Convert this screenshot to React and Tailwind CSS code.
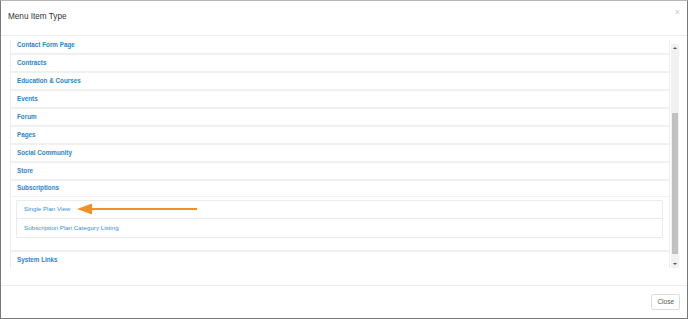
import React from "react";

const panels = [
  "Contact Form Page",
  "Contracts",
  "Education & Courses",
  "Events",
  "Forum",
  "Pages",
  "Social Community",
  "Store",
];

function PanelHead({ label }) {
  return (
    <div className="h-[18px] bg-white border-l border-r border-[#ececec] border-b-2 border-b-[#f0f0f0] flex items-center px-[6px]">
      <span className="text-[6.3px] font-bold text-[#2a84c6] leading-none">{label}</span>
    </div>
  );
}

export default function App() {
  return (
    <div
      className="w-[688px] h-[319px] bg-white border-l border-r border-b border-[#7a7a7a] border-t border-t-[#b5b5b5] flex flex-col overflow-hidden"
      style={{ fontFamily: '"Liberation Sans", Arial, sans-serif' }}
    >
      {/* header */}
      <div className="h-[35px] shrink-0 border-b border-[#ececec] flex items-start justify-between pl-[7px] pr-[7px]">
        <div className="pt-[12px] text-[8.2px] text-[#333] leading-none">Menu Item Type</div>
        <div className="pt-[7px] text-[9px] text-[#c8c8c8] leading-none">×</div>
      </div>

      {/* body */}
      <div className="h-[249px] shrink-0 flex pt-[4px] pl-[9px] pr-[8px] pb-[17px]">
        <div className="flex-1 overflow-hidden">
          <div className="mt-[-3px] flex flex-col">
            {panels.map((p) => (
              <PanelHead key={p} label={p} />
            ))}
            {/* Subscriptions */}
            <div className="bg-white border-l border-r border-[#ececec] border-b-2 border-b-[#f0f0f0]">
              <div className="h-[16px] border-b border-[#f2f2f2] flex items-center px-[6px]">
                <span className="text-[6.3px] font-bold text-[#2a84c6] leading-none">Subscriptions</span>
              </div>
              <div className="pt-[3px] pb-[12px] pl-[5px] pr-[6px]">
                <div className="border border-[#ebebeb] rounded-[1px]">
                  <div className="h-[18px] border-b border-[#ebebeb] flex items-center px-[7px] relative">
                    <span className="text-[6.2px] text-[#3a8fd2] leading-none">Single Plan View</span>
                    <svg
                      className="absolute left-[59px] top-[2px]"
                      width="122"
                      height="12"
                      viewBox="0 0 122 12"
                    >
                      <line x1="12" y1="6" x2="121" y2="6" stroke="#f0902a" strokeWidth="2" />
                      <polygon points="1,6 16,0.5 16,11.5" fill="#f0902a" />
                    </svg>
                  </div>
                  <div className="h-[18px] flex items-center px-[7px]">
                    <span className="text-[6.2px] text-[#3a8fd2] leading-none">
                      Subscription Plan Category Listing
                    </span>
                  </div>
                </div>
              </div>
            </div>
            <PanelHead label="System Links" />
          </div>
        </div>
        {/* scrollbar */}
        <div className="w-[8px] ml-[1px] mt-[4px] bg-[#f1f1f1] flex flex-col">
          <div className="h-[8px] flex items-center justify-center">
            <div className="w-0 h-0 border-l-[2px] border-r-[2px] border-b-[2px] border-l-transparent border-r-transparent border-b-[#555]" />
          </div>
          <div className="h-[61px]" />
          <div className="flex-1 mx-[1px] bg-[#c1c1c1]" />
          <div className="h-[14px] flex items-end justify-center pb-[3px]">
            <div className="w-0 h-0 border-l-[2px] border-r-[2px] border-t-[2px] border-l-transparent border-r-transparent border-t-[#555]" />
          </div>
        </div>
      </div>

      {/* footer */}
      <div className="flex-1 border-t border-[#ececec] flex items-start justify-end pt-[8px] pr-[7px]">
        <button className="h-[16px] px-[5px] border border-[#dcdcdc] rounded-[2px] bg-white text-[6.5px] text-[#555] leading-none">
          Close
        </button>
      </div>
    </div>
  );
}
